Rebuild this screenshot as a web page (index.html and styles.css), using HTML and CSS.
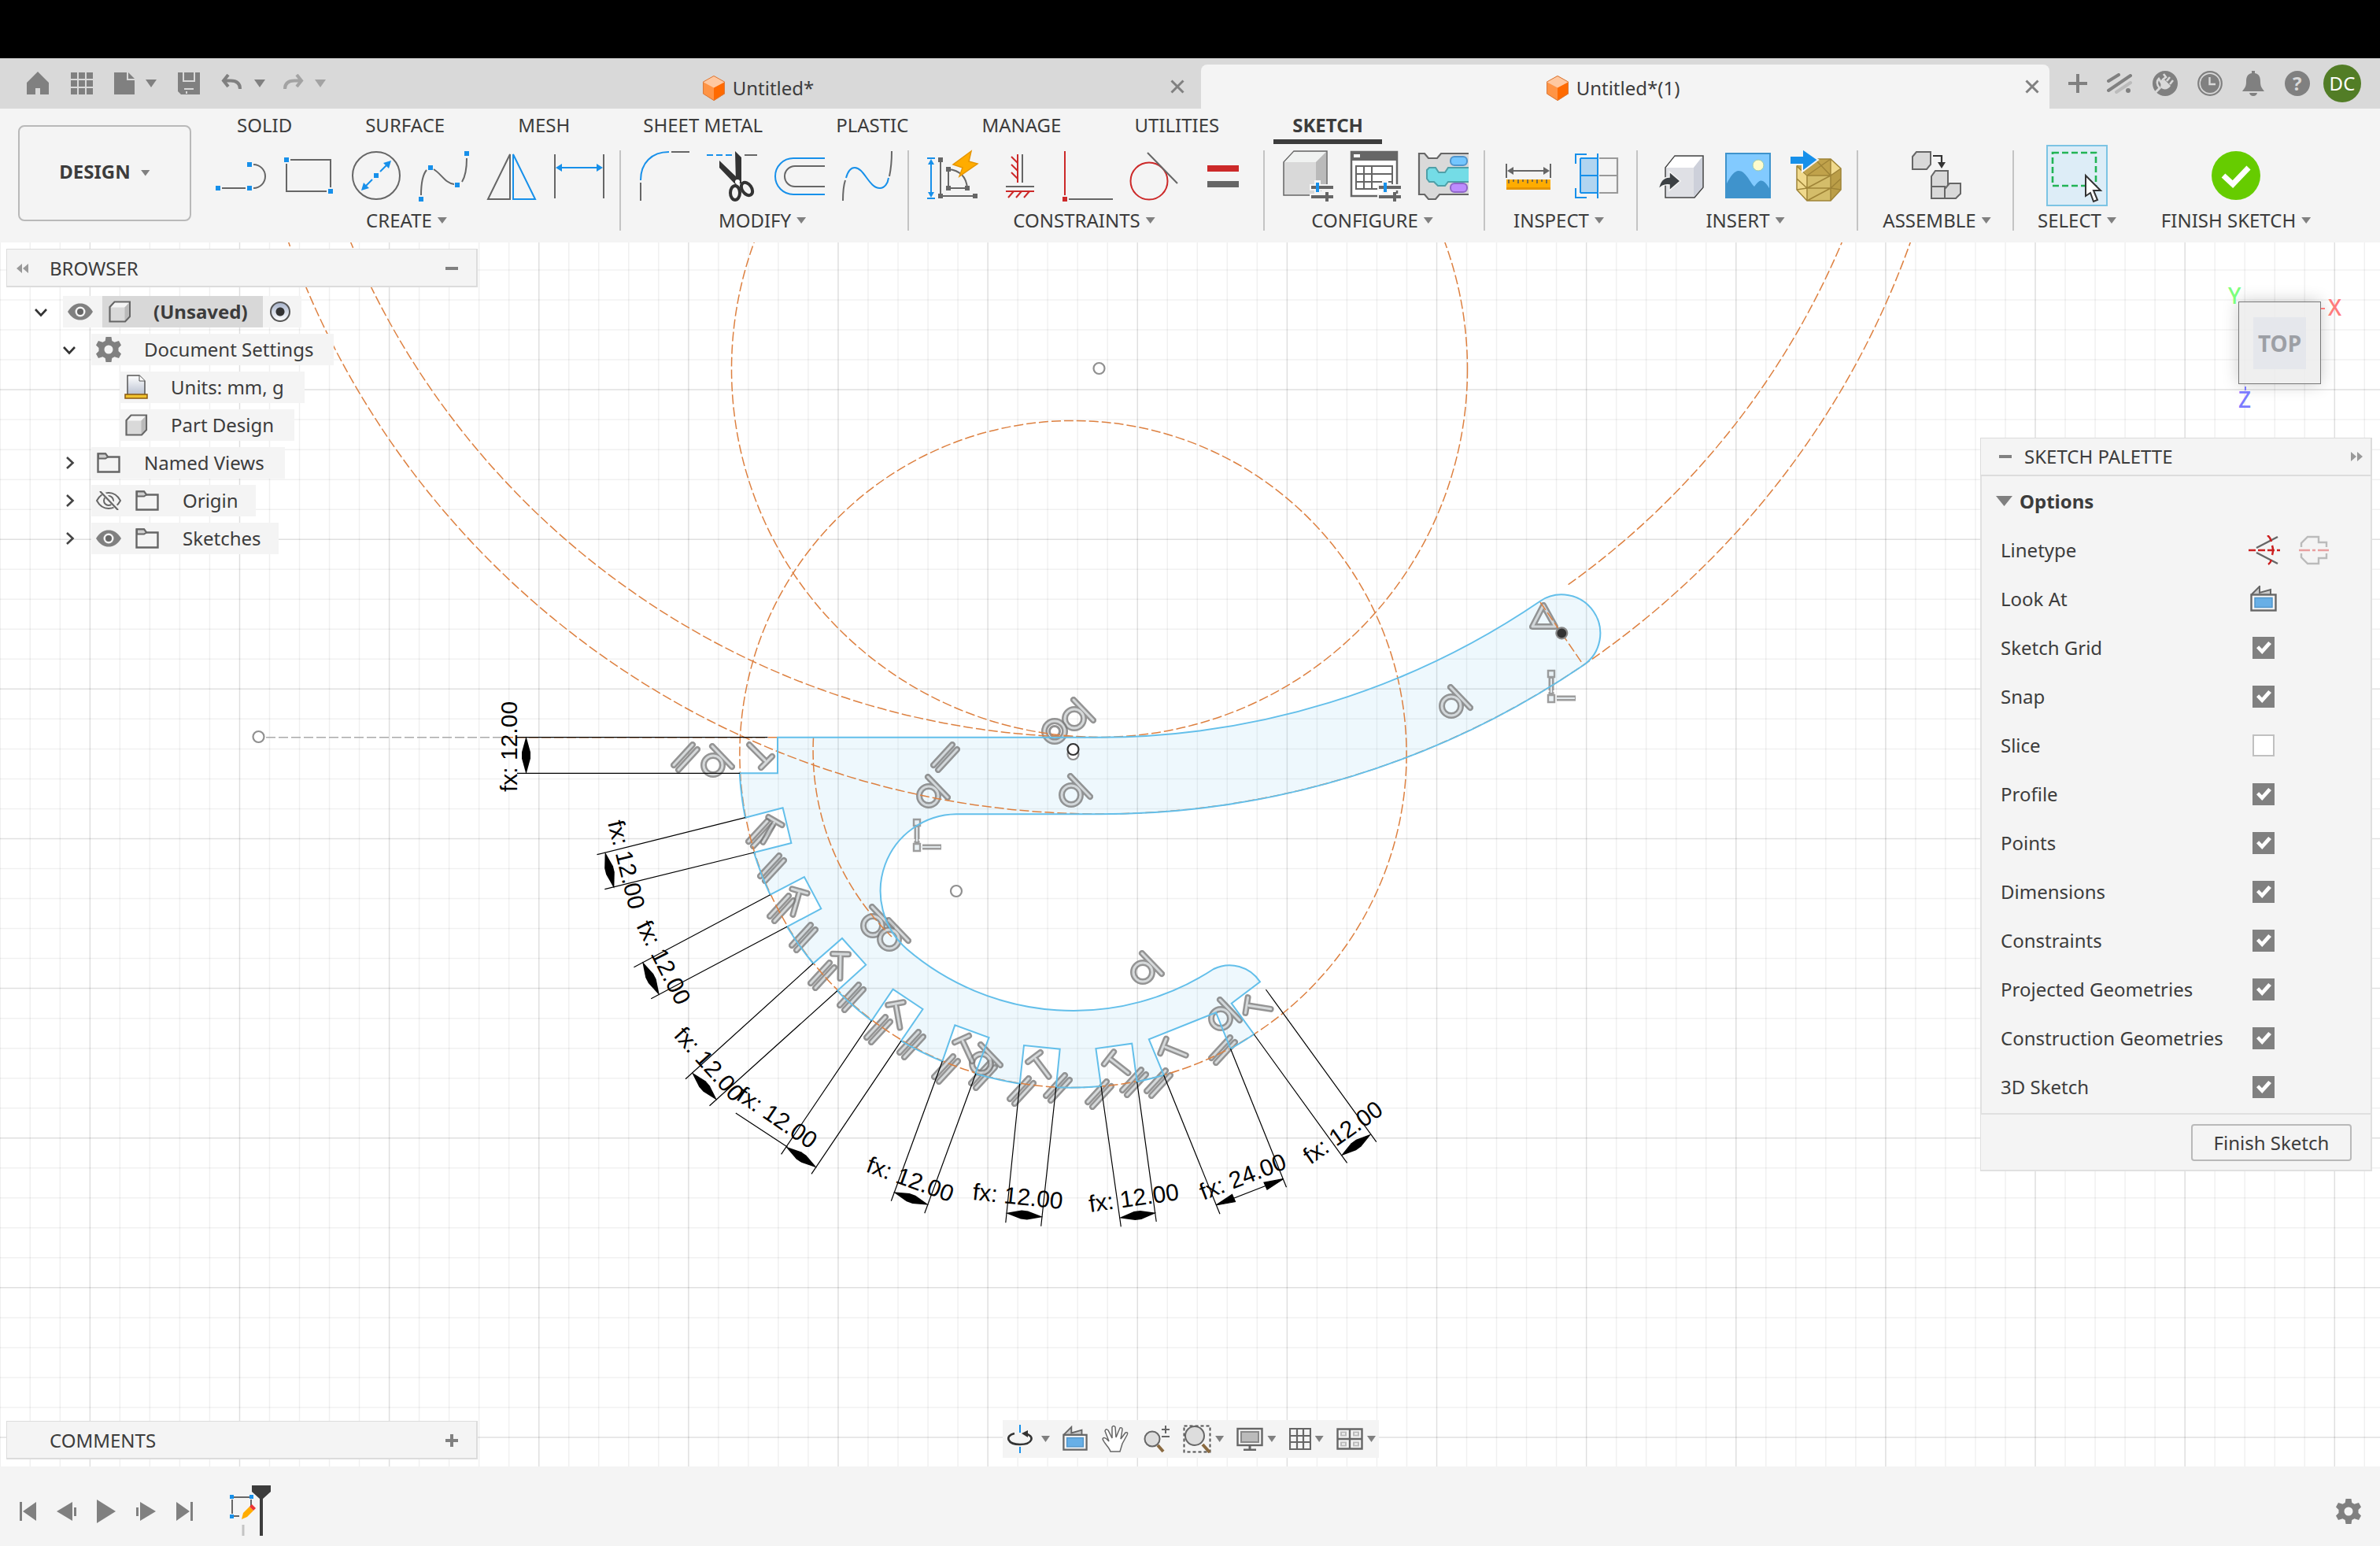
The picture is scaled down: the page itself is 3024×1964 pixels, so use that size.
FILE: index.html
```html
<!DOCTYPE html>
<html lang="en">
<head>
<meta charset="utf-8">
<title>Untitled*(1)</title>
<link rel="stylesheet" href="styles.css">
</head>
<body>
<svg class="defs" aria-hidden="true">
  <defs>
    <symbol id="i-box" viewBox="0 0 28 28"><path d="M1.500 8L7.500 1.500H27V20L21 26.500H1.500z" fill="#d9d9d9" stroke="#666" stroke-width="2.200"/><path d="M3 8.500L8 2.800H25.500L20.500 8.500z" fill="#f5f5f5"/><path d="M20.500 8.500L25.800 3V19.500L20.500 25z" fill="#bababa"/></symbol>
    <symbol id="i-folder" viewBox="0 0 30 28"><path d="M1.500 2.500H11L14 6.500H28.500V25.500H1.500z" fill="#f4f4f4" stroke="#666" stroke-width="2.400"/><path d="M2 2.500H11L14 6.500L11 8.500H2z" fill="#d0d0d0" stroke="#666" stroke-width="2"/></symbol>
    <symbol id="i-eye" viewBox="0 0 32 24"><path d="M0 12C5 4 10 1.500 16 1.500S27 4 32 12C27 20 22 22.500 16 22.500S5 20 0 12z" fill="#808080"/><circle cx="16" cy="12" r="6.500" fill="#f4f4f4"/><circle cx="16" cy="12" r="4" fill="#666"/></symbol>
    <symbol id="i-eyeoff" viewBox="0 0 32 24"><path d="M1 12C5 4.500 10 2 16 2S27 4.500 31 12C27 19.500 22 22 16 22S5 19.500 1 12z" fill="none" stroke="#666" stroke-width="2"/><circle cx="16" cy="12" r="6" fill="none" stroke="#666" stroke-width="2"/><path d="M6 -1L29 24" stroke="#f4f4f4" stroke-width="5"/><path d="M5 0L28 24" stroke="#666" stroke-width="2.200"/></symbol>
    <symbol id="i-gear" viewBox="0 0 32 32"><path d="M12.500 0h7l.8 5 3.200 1.700L29 5l3 5.600-3.500 3.400v4L32 21.400 29 27l-5.500-1.700-3.200 1.700-.8 5h-7l-.8-5-3.200-1.700L3 27l-3-5.600L3.500 18v-4L0 10.600 3 5l5.500 1.700L11.700 5zM16 10.500a5.500 5.500 0 1 0 0 11 5.500 5.500 0 0 0 0-11z" fill="#808080" fill-rule="evenodd"/></symbol>
    <symbol id="i-open" viewBox="0 0 18 12"><path d="M2 2L9 9.500 16 2" fill="none" stroke="#333" stroke-width="2.600"/></symbol>
    <symbol id="i-closed" viewBox="0 0 12 18"><path d="M2 2L9.500 9 2 16" fill="none" stroke="#444" stroke-width="2.600"/></symbol>
    <symbol id="i-comp" viewBox="0 0 28 32"><path d="M14 0L28 8V23L14 32 0 23V8z" fill="#ff9445"/><path d="M14 15L28 8V23L14 32z" fill="#ff6a00"/><path d="M14 0L28 8 14 15.500 0 8z" fill="#ffc8a0"/><path d="M14 .5L27.500 8V23L14 31.500.5 23V8z" fill="none" stroke="#d97a3c"/></symbol>
    <symbol id="i-look" viewBox="0 0 34 34"><path d="M2 11L12 1V9L26 5V11" fill="#ccc" stroke="#666" stroke-width="2"/><rect x="1.500" y="11.500" width="31" height="20" fill="#f4f4f4" stroke="#666" stroke-width="2.400"/><rect x="6" y="15.500" width="22" height="12" fill="#68afe6" stroke="#5096cc" stroke-width="1.500"/></symbol>
    <symbol id="i-x" viewBox="0 0 18 18"><path d="M1.500 1.500L16.500 16.500M16.500 1.500L1.500 16.500" stroke="#808080" stroke-width="3"/></symbol>

    <g id="dia"><path d="M-24 0L-4 -5.500H4L24 0L4 5.500H-4z"/></g>
    <g id="par"><path class="g-out" d="M-15 10L9 -16M-9 16L15 -10"/><path class="g-in" d="M-15 10L9 -16M-9 16L15 -10"/></g>
    <g id="tan"><path class="g-out" d="M-12 0A12 12 0 1 1 12 0A12 12 0 1 1 -12 0zM-1 -24L24 2"/><path class="g-in" d="M-12 0A12 12 0 1 1 12 0A12 12 0 1 1 -12 0zM-1 -24L24 2"/></g>
    <g id="tee"><path class="g-out" d="M-10 0H10M0 3V31"/><path class="g-in" d="M-10 0H10M0 3V31"/></g>
    <g id="ell"><path d="M-1 -30V-12M-1 -10V-2M6 -2H30" fill="none" stroke="#858585" stroke-width="7"/><path d="M-1 -32V-8" stroke="#858585" stroke-width="5"/><path d="M-5 -37H3V-29H-5zM-5 -6H3V3H-5z" fill="#e6eef2" stroke="#858585" stroke-width="2.400"/><path d="M-1 -27V-9M5 -2H29" fill="none" stroke="#dde4e8" stroke-width="2"/></g>
    <path id="body" d="M988 936.700H1397A996 996 0 0 0 1956.500 764A49 49 0 0 1 2012 845A1094 1094 0 0 1 1397 1034.300H1215A97.700 97.700 0 0 0 1152 1205.500A325.500 325.500 0 0 0 1542 1231A46 46 0 0 1 1601 1247.300L1564.700 1274.700L1593.300 1314A423.600 423.600 0 0 1 1563.500 1332.300L1545 1286.300L1459.800 1320.300L1478.600 1365.700A423.600 423.600 0 0 1 1444.700 1374.300L1438.200 1325.700L1392.400 1332L1399 1380A423.600 423.600 0 0 1 1341.800 1381.300L1346.700 1332.700L1301 1328L1295.700 1376.700A423.600 423.600 0 0 1 1239.400 1363.700L1256.500 1318L1213.300 1302.300L1197.300 1348.300A423.600 423.600 0 0 1 1145 1322.300L1172.500 1282L1134.600 1256.700L1107.400 1296.700A423.600 423.600 0 0 1 1063.800 1258.700L1100.200 1225.700L1070 1192L1033.200 1224A423.600 423.600 0 0 1 1000 1177.300L1043.300 1154.300L1021.900 1114L978.600 1136.700A423.600 423.600 0 0 1 958 1083L1005.400 1071L994.600 1026.300L946.900 1038.700A423.600 423.600 0 0 1 939.700 982.300H988z"/>
  </defs>
</svg>

<div class="screen-top"></div>

<header class="titlebar">
  <nav class="quick" aria-label="Quick access">
    <button class="q" aria-label="Home"><svg width="30" height="30"><path d="M15 0L29 14V29H18V21H12V29H1V14z" fill="#808080"/></svg></button>
    <button class="q" aria-label="Data panel"><svg width="28" height="28"><path d="M0 0h8v8H0zM10 0h8v8h-8zM20 0h8v8h-8zM0 10h8v8H0zM10 10h8v8h-8zM20 10h8v8h-8zM0 20h8v8H0zM10 20h8v8h-8zM20 20h8v8h-8z" fill="#808080"/></svg></button>
    <button class="q q-caret" aria-label="File"><svg width="26" height="28"><path d="M0 0H16V10H26V28H0zM18 0L26 8H18z" fill="#808080"/></svg><i class="caret big"></i></button>
    <button class="q" aria-label="Save"><svg width="28" height="28"><path d="M0 0H6V12H22V0H28V28H20V20H8V28H4L0 24zM8 0H20V10H8zM8 22H20V28H8zM10 24V27H12V24z" fill="#808080" fill-rule="evenodd"/></svg></button>
    <button class="q q-caret" aria-label="Undo"><svg width="28" height="24"><path d="M9 1L3 8.500 9 16M3 8.500H12C20 8.500 24 12 24 19" fill="none" stroke="#808080" stroke-width="4"/></svg><i class="caret big"></i></button>
    <button class="q q-caret faded" aria-label="Redo"><svg width="28" height="24"><path d="M19 1L25 8.500 19 16M25 8.500H16C8 8.500 4 12 4 19" fill="none" stroke="#808080" stroke-width="4"/></svg><i class="caret big"></i></button>
  </nav>
  <div class="doc-tab">
    <a class="doc-name" href="#"><svg width="28" height="32"><use href="#i-comp"/></svg>Untitled*</a>
    <button class="close" aria-label="Close"><svg width="18" height="18"><use href="#i-x"/></svg></button>
  </div>
  <div class="doc-tab active">
    <a class="doc-name" href="#"><svg width="28" height="32"><use href="#i-comp"/></svg>Untitled*(1)</a>
    <button class="close" aria-label="Close"><svg width="18" height="18"><use href="#i-x"/></svg></button>
  </div>
  <div class="account">
    <button aria-label="New tab"><svg width="24" height="24"><path d="M12 0V24M0 12H24" stroke="#808080" stroke-width="4"/></svg></button>
    <button aria-label="Extensions"><svg width="32" height="26"><g stroke="#808080" stroke-width="4" stroke-linecap="round"><path d="M2 10L15 2M2 22L30 3"/><path d="M12 24L30 12" stroke="#bbb"/></g><circle cx="27" cy="22" r="3" fill="#808080"/></svg></button>
    <button aria-label="Offline status"><svg width="32" height="32"><circle cx="16" cy="16" r="14.500" fill="none" stroke="#808080" stroke-width="3"/><circle cx="16" cy="16" r="14" fill="#808080"/><path d="M9 22C4 16 6 12 8 10L11 15 13 11 17 8 14 4M18 13L22 8M22 17L26 12" fill="none" stroke="#d9d9d9" stroke-width="2.600"/><path d="M11 14L15 11 23 19C20 24 14 25 10 21z" fill="#d9d9d9"/><path d="M10 21L3 28" stroke="#d9d9d9" stroke-width="3"/></svg></button>
    <button aria-label="Job status"><svg width="32" height="32"><circle cx="16" cy="16" r="14.800" fill="none" stroke="#808080" stroke-width="2.200"/><circle cx="16" cy="16" r="12" fill="#808080"/><path d="M15.500 8V17H23" fill="none" stroke="#d9d9d9" stroke-width="2.400"/></svg></button>
    <button aria-label="Notifications"><svg width="28" height="32"><path d="M12 0H16V3C22 4 23 9 23 14C23 20 25 22 28 26H0C3 22 5 20 5 14C5 9 6 4 12 3zM9 28H19Q18 32 14 32T9 28z" fill="#808080"/></svg></button>
    <button aria-label="Help" class="help">?</button>
    <button aria-label="Account" class="avatar">DC</button>
  </div>
</header>

<section class="ribbon">
  <button class="workspace">DESIGN<i class="caret"></i></button>
  <div class="ribbon-main">
    <nav class="tabs">
      <a href="#">SOLID</a><a href="#">SURFACE</a><a href="#">MESH</a><a href="#">SHEET METAL</a><a href="#">PLASTIC</a><a href="#">MANAGE</a><a href="#">UTILITIES</a><a href="#" class="on">SKETCH</a>
    </nav>
    <div class="groups">
      <div class="group"><div class="tools">
        <button aria-label="Line"><svg viewBox="0 0 64 64"><g class="k"><path d="M8 48H38M48 18A15 15 0 0 1 48 48"/></g><path class="bf" d="M0 45h6v6H0zM40 45h6v6h-6zM40 15h6v6h-6z"/></svg></button>
        <button aria-label="Rectangle"><svg viewBox="0 0 64 64"><path class="k" d="M9 12H60V47M4 17V52H55"/><path class="bf" d="M1 9h6v6H1zM57 49h6v6h-6z"/></svg></button>
        <button aria-label="Circle"><svg viewBox="0 0 64 64"><circle class="k" cx="32" cy="32" r="30"/><path class="b" d="M37 27L46 18M27 37L18 46"/><path class="bf" d="M29 29h6v6h-6zM51 13L48 23 41 16zM13 51L16 41 23 48z"/></svg></button>
        <button aria-label="Spline"><svg viewBox="0 0 64 64"><path class="k" d="M3 57C3 42 5 31 10 25M19 24C29 30 34 42 45 43M55 40C60 32 61 20 61 10"/><path class="bf" d="M0 59h6v6H0zM12 19h6v6h-6zM46 41h6v6h-6zM58 1h6v6h-6z"/></svg></button>
        <button aria-label="Mirror"><svg viewBox="0 0 64 64"><path class="k" d="M30 5V62H2z"/><path class="b" d="M34 5V62H62z"/></svg></button>
        <button aria-label="Sketch dimension"><svg viewBox="0 0 64 64"><path class="k" d="M1 5V61M63 5V61"/><path class="b" d="M6 22H58"/><path class="bf" d="M2 22L10 17V27zM62 22L54 17V27z"/></svg></button>
      </div><button class="menu">CREATE<i class="caret"></i></button></div>

      <div class="group"><div class="tools">
        <button aria-label="Fillet"><svg viewBox="0 0 64 64"><path class="b" d="M2 38C2 16 16 2 38 2"/><path class="k" d="M41 2H64M2 41V64"/></svg></button>
        <button aria-label="Trim"><svg viewBox="0 0 64 64"><path class="b" d="M0 6H34" stroke-dasharray="8 4" stroke-width="3"/><path class="k" d="M48 6H64"/><path d="M36 1L44 9V42L37 42zM16 13L42 38 37 44 16 22z" fill="#333"/><ellipse cx="36" cy="54" rx="6" ry="9" fill="none" stroke="#333" stroke-width="4"/><ellipse cx="51" cy="49" rx="6" ry="9" fill="none" stroke="#333" stroke-width="4" transform="rotate(-35 51 49)"/><circle cx="39" cy="40" r="3" fill="#fff"/></svg></button>
        <button aria-label="Offset"><svg viewBox="0 0 64 64"><path class="b" d="M64 10H24A23 23 0 0 0 24 56H64"/><path class="k" d="M64 20H26A13 13 0 0 0 26 46H64"/></svg></button>
        <button aria-label="Extend"><svg viewBox="0 0 64 64"><path class="k" d="M1 64C1 54 2 44 4 38M60 33C62 24 63 14 63 1"/><path class="b" d="M5 35C8 24 12 22 16 22C28 22 34 48 48 48C54 48 58 42 59 35"/></svg></button>
      </div><button class="menu">MODIFY<i class="caret"></i></button></div>

      <div class="group"><div class="tools">
        <button aria-label="Auto constrain"><svg viewBox="0 0 64 64"><path class="b" d="M0 10H10M0 61H10M5 14V57"/><path class="bf" d="M5 11L9 18H1zM5 60L1 53H9z"/><path class="k" d="M17 12V58H60M27 24V48H51M27 24Q49 26 51 48"/><path d="M14 9h6v6h-6zM14 55h6v6h-6zM58 55h6v6h-6zM24 21h6v6h-6zM24 45h6v6h-6zM48 45h6v6h-6z" fill="#666"/><path d="M56 1L33 18 45 22 41 33 64 17 53 14z" fill="#ffac00" stroke="#e69500" stroke-width="1.500"/></svg></button>
        <button aria-label="Horizontal/Vertical"><svg viewBox="0 0 64 64"><path class="k" d="M35 5V41M14 46H50"/><path class="r" d="M29 5V41M29 16L21 8M29 26L21 18M29 36L21 28M14 52H50M24 52L17 60M34 52L27 60M44 52L37 60"/></svg></button>
        <button aria-label="Perpendicular"><svg viewBox="0 0 64 64"><path class="r" d="M3 1V57"/><path class="k" d="M8 62H64"/><path d="M0 59h6v6H0z" fill="#cc2929"/></svg></button>
        <button aria-label="Tangent"><svg viewBox="0 0 64 64"><circle class="r" cx="24" cy="39" r="23.500"/><path class="k" d="M22 3L60 42"/></svg></button>
        <button aria-label="Equal"><svg viewBox="0 0 64 64"><path d="M12 19h40v8H12z" fill="#cc2929"/><path d="M12 39h40v8H12z" fill="#666"/></svg></button>
      </div><button class="menu">CONSTRAINTS<i class="caret"></i></button></div>

      <div class="group"><div class="tools">
        <button aria-label="Configure model"><svg viewBox="0 0 64 64"><path d="M1 15L14 1H56V43L42 57H1z" fill="#d9d9d9" stroke="#666" stroke-width="1.500"/><path d="M2 15L14 2H55L42 15z" fill="#f0f2f1"/><path d="M42 15L55 2V43L42 56z" fill="#bababa"/><path d="M34 47H66M34 59H66M44 38V55" stroke="#f4f4f4" stroke-width="8"/><path d="M36 47H64M36 59H64M56 53V65" stroke="#666" stroke-width="4"/><path d="M44 41V53" stroke="#1790ea" stroke-width="4"/></svg></button>
        <button aria-label="Configuration table"><svg viewBox="0 0 64 64"><path d="M1 2H59V58H1z" fill="#fff" stroke="#666" stroke-width="2.500"/><path d="M0 1H60V13H0z" fill="#666"/><path d="M4 5h8v4H4z" fill="#fff"/><path class="k" d="M7 20H53V49H7zM7 30H53M7 40H53M17 20V49M27 20V49"/><path d="M34 47H66M34 59H66M44 38V55" stroke="#f4f4f4" stroke-width="8"/><path d="M36 47H64M36 59H64M56 53V65" stroke="#666" stroke-width="4"/><path d="M44 41V53" stroke="#1790ea" stroke-width="4"/></svg></button>
        <button aria-label="Feature blocks"><svg viewBox="0 0 64 64"><path d="M64 4H29L24 10H13L8 4H1V56H8L13 62H22L27 56H64" fill="#d9d9d9" stroke="#666" stroke-width="2.200"/><path d="M64 22H38L34 28H26L22 22H14L11 25V36L14 40H20L25 45H34L38 40H64" fill="#74dce6" stroke="#4fa0a8" stroke-width="2"/><rect x="41" y="8" width="21" height="11" rx="5" fill="#74c6ff" stroke="#4f95cc" stroke-width="2"/><rect x="41" y="42" width="21" height="11" rx="5" fill="#bd8cff" stroke="#9066c8" stroke-width="2"/></svg></button>
      </div><button class="menu">CONFIGURE<i class="caret"></i></button></div>

      <div class="group"><div class="tools">
        <button aria-label="Measure"><svg viewBox="0 0 64 64"><path class="k" d="M4 17V35M60 17V35M8 26H56"/><path d="M5 26L13 21V31zM59 26L51 21V31z" fill="#666"/><path d="M4 37H60V49H4z" fill="#ffac00"/><path d="M4 47H60V50H4z" fill="#e69500"/><path d="M7 37V42M13 37V40M19 37V42M25 37V40M31 37V42M37 37V40M43 37V42M49 37V40M55 37V42" stroke="#555" stroke-width="1.500"/></svg></button>
        <button aria-label="Section analysis"><svg viewBox="0 0 64 64"><path d="M36 10H59V54H36M36 32H59" fill="none" stroke="#999" stroke-width="2.200"/><path d="M12 10H34V54H12z" fill="#b1d5f0"/><path class="b" d="M34 4V61M12 10H34M12 32H34M12 54H34M12 10V54M20 5H6V17M20 60H6V48"/></svg></button>
      </div><button class="menu">INSPECT<i class="caret"></i></button></div>

      <div class="group"><div class="tools">
        <button aria-label="Insert derive"><svg viewBox="0 0 64 64"><path d="M12 22L24 7H60V47L49 60H12z" fill="#dfe0e5" stroke="#444" stroke-width="1.500"/><path d="M13 22L24 8H59L48 22z" fill="#fff"/><path d="M48 22L59 8V47L48 59z" fill="#cdd0da"/><path d="M3 50C5 38 10 34 17 34V27L31 39 17 51V44C11 43 7 45 3 50z" fill="#3c4044" stroke="#f4f4f4" stroke-width="1.500"/></svg></button>
        <button aria-label="Insert image"><svg viewBox="0 0 64 64"><path d="M3 4H59V60H3z" fill="#82caff"/><path d="M3 44C9 32 14 26 19 26C28 26 33 40 39 46C45 38 47 38 50 39Q55 42 59 50V60H3z" fill="#3f93cc"/><circle cx="44" cy="19" r="7" fill="#fffccc" stroke="#99c9b0"/><path d="M3 4H59V60H3z" fill="none" stroke="#3f93cc" stroke-width="2"/></svg></button>
        <button aria-label="Insert mesh"><svg viewBox="0 0 64 64"><path d="M7 20L20 11H50L63 23V50L50 64H20L7 50z" fill="#d4bd6a"/><path d="M20 11H50V32H22L8 20z" fill="#c0a24b"/><path d="M50 32L63 23V50L50 64z" fill="#bb9e48"/><path d="M50 11L63 23 50 32z" fill="#f0d98c"/><path d="M7 20L20 32V64L7 50z" fill="#f0d98c"/><path d="M7 20L20 11H50L63 23V50L50 64H20L7 50zM20 32H50V64M20 32V64M7 20L20 32M50 11V32L63 23M20 32L50 11M20 48H50L63 36M20 48L50 32M20 64L50 48M20 48L7 36M50 32L30 11M50 48L63 50M7 50L20 48" fill="none" stroke="#9f8437" stroke-width="1.500"/><path d="M-2 7H14V-2L34 12 14 27V18H-2z" fill="#1790ea" stroke="#f4f4f4" stroke-width="2"/></svg></button>
      </div><button class="menu">INSERT<i class="caret"></i></button></div>

      <div class="group wide"><div class="tools">
        <button aria-label="New component"><svg viewBox="0 0 64 64"><g fill="#d9d9d9" stroke="#666" stroke-width="2"><path d="M1 8L6 2H24V18L19 24H1z"/><path d="M25 33L30 26H46V60H25z"/><path d="M42 49L48 42H62V55L56 61H42z"/><path d="M25 46H42V61H25z"/></g><path d="M27 7H38V16" fill="none" stroke="#333" stroke-width="2.200"/><path d="M33 15H43L38 23z" fill="#333"/></svg></button>
      </div><button class="menu">ASSEMBLE<i class="caret"></i></button></div>

      <div class="group select"><div class="tools">
        <button aria-label="Select" class="pressed"><svg viewBox="0 0 64 64"><path d="M1 3H56V45H1z" fill="none" stroke="#22b455" stroke-width="2.600" stroke-dasharray="8 4"/><path d="M43 32L62 51H53L58 63 53 65 49 54 43 58z" fill="#fff" stroke="#333" stroke-width="2"/></svg></button>
      </div><button class="menu">SELECT<i class="caret"></i></button></div>

      <div class="group finish"><div class="tools">
        <button aria-label="Finish sketch"><svg viewBox="0 0 64 64"><circle cx="32" cy="32" r="31" fill="#66cc00"/><path d="M16 32L28 43 48 22" fill="none" stroke="#fff" stroke-width="7"/></svg></button>
      </div><button class="menu">FINISH SKETCH<i class="caret"></i></button></div>
    </div>
  </div>
</section>

<main class="canvas">
  <svg class="sketch" viewBox="0 308 3024 1555" preserveAspectRatio="xMidYMin slice">
    <g fill="none">
      <path d="M-.5 1086H3100" stroke="#000" stroke-opacity=".06" stroke-width="1560" stroke-dasharray="1.500 36.526"/>
      <path d="M1512 304.200V1900" stroke="#000" stroke-opacity=".055" stroke-width="3100" stroke-dasharray="1.500 36.526"/>
      <path d="M-76.500 1086H3100" stroke="#000" stroke-opacity=".07" stroke-width="1560" stroke-dasharray="1.500 188.630"/>
      <path d="M1512 304.200V1900" stroke="#000" stroke-opacity=".07" stroke-width="3100" stroke-dasharray="1.500 188.630"/>
    </g>
    <use href="#body" fill="#5bb8ec" fill-opacity=".1"/>
    <g class="glyphs">
      <use href="#par" x="871" y="962"/><use href="#par" x="1201" y="962"/><use href="#par" x="966" y="1059"/><use href="#par" x="981" y="1103"/><use href="#par" x="993" y="1154"/><use href="#par" x="1021" y="1191"/><use href="#par" x="1045" y="1239"/><use href="#par" x="1082" y="1267"/><use href="#par" x="1116" y="1308"/><use href="#par" x="1158" y="1327"/><use href="#par" x="1202" y="1358"/><use href="#par" x="1249" y="1366"/><use href="#par" x="1298" y="1386"/><use href="#par" x="1344" y="1382"/><use href="#par" x="1397" y="1390"/><use href="#par" x="1441" y="1375"/><use href="#par" x="1472" y="1376"/><use href="#par" x="1554" y="1334"/>
      <use href="#tan" x="906" y="972"/><use href="#tan" x="1365" y="913"/><use href="#tan" x="1361" y="1010"/><use href="#tan" x="1844" y="897"/><use href="#tan" x="1180" y="1011"/><use href="#tan" x="1109" y="1176"/><use href="#tan" x="1130" y="1193"/><use href="#tan" x="1247" y="1351"/><use href="#tan" x="1452" y="1235"/><use href="#tan" x="1551" y="1294"/>
      <use href="#tee" transform="translate(974 968) rotate(135)"/><use href="#tee" transform="translate(985 1043) rotate(30)"/><use href="#tee" transform="translate(1016 1132) rotate(16)"/><use href="#tee" transform="translate(1068 1212) rotate(1)"/><use href="#tee" transform="translate(1138 1275) rotate(-10)"/><use href="#tee" transform="translate(1222 1320) rotate(-25)"/><use href="#tee" transform="translate(1314 1343) rotate(-37)"/><use href="#tee" transform="translate(1409 1344) rotate(-52)"/><use href="#tee" transform="translate(1478 1329) rotate(-68)"/><use href="#tee" transform="translate(1584 1277) rotate(-81)"/>
      <use href="#ell" x="1166" y="1078"/><use href="#ell" x="1972" y="889"/>
      <g><path class="g-out" d="M1961 769L1947 796H1976z"/><path class="g-in" d="M1961 769L1947 796H1976z"/></g>
      <g><circle class="g-out" cx="1340" cy="929" r="13"/><circle class="g-in" cx="1340" cy="929" r="13"/><circle cx="1340" cy="929" r="6.500" fill="none" stroke="#777" stroke-width="3"/></g>
    </g>
    <g class="proj">
      <circle cx="1397" cy="469" r="467.500"/>
      <circle cx="1363.500" cy="958" r="423.600"/>
      <circle cx="1397" cy="-60" r="1094"/>
      <path d="M438 289A1024.300 1024.300 0 0 0 1393.500 936.600M1992.600 742.700A1024.300 1024.300 0 0 0 2348 289"/>
      <path d="M1033.500 937A330 330 0 0 0 1133 1190M1957 765L2012 845M640 936.700H990"/>
    </g>
    <path d="M338 936.700H640" stroke="#aaa" stroke-width="1.500" stroke-dasharray="12 4"/>
    <use href="#body" fill="none" stroke="#63bfea" stroke-width="2"/>

    <g fill="#fff" stroke="#909090" stroke-width="2.200">
      <circle cx="1396.500" cy="468" r="7"/><circle cx="1215" cy="1132" r="7"/><circle cx="328.500" cy="936" r="7"/><circle cx="1363.500" cy="958" r="7"/>
      <circle cx="1363.500" cy="952" r="7" stroke="#333"/><circle cx="1984.300" cy="804.300" r="7" fill="#333" stroke="#888"/>
    </g>

    <g class="dims">
      <path d="M657 936.700H975.500M657 982.300H940M758.500 1085.700L946.900 1038.700M768.300 1129.700L958 1083M805.400 1228.700L978.600 1136.700M827.200 1268.700L1000 1177.300M871 1370.700L1033.200 1224M901.500 1404.700L1063.800 1258.700M992.600 1466.300L1107.400 1296.700M1031 1491.300L1145 1322.300M934.800 1414L1000.700 1457.300M1132.300 1525.700L1197.300 1348.300M1174.800 1541.300L1239.900 1363.700M1277.800 1553.300L1295.700 1376.700M1322.700 1557.700L1341.800 1381.300M1399 1380L1424.300 1558.300M1444.700 1374.300L1469.200 1552M1478.600 1365.700L1550 1542.300M1563.500 1332.300L1634.500 1508.300M1593.300 1314L1711.600 1477.300M1608.400 1257L1748.800 1450.700M1545 1531L1630.400 1497.700"/>
      <use href="#dia" transform="translate(668.500 959.500) rotate(90)"/>
      <use href="#dia" transform="translate(774.500 1105.500) rotate(76)"/>
      <use href="#dia" transform="translate(827 1243) rotate(63)"/>
      <use href="#dia" transform="translate(895 1380) rotate(48)"/>
      <use href="#dia" transform="translate(1018 1470) rotate(34)"/>
      <use href="#dia" transform="translate(1157.500 1522.500) rotate(20)"/>
      <use href="#dia" transform="translate(1301.500 1543.500) rotate(6)"/>
      <use href="#dia" transform="translate(1445.500 1544) rotate(-8)"/>
      <use href="#dia" transform="translate(1723 1454.500) rotate(-36)"/>
      <path d="M1545 1531L1565.500 1517.500L1569.500 1526.500zM1630.400 1497.700L1610 1511.200L1606 1502.200z"/>
      <text transform="translate(657 1006) rotate(-90)">fx: 12.00</text>
      <text transform="translate(772 1045) rotate(76)">fx: 12.00</text>
      <text transform="translate(808 1176) rotate(63)">fx: 12.00</text>
      <text transform="translate(855 1316) rotate(48)">fx: 12.00</text>
      <text transform="translate(934 1396) rotate(34)">fx: 12.00</text>
      <text transform="translate(1099 1488) rotate(20)">fx: 12.00</text>
      <text transform="translate(1235 1524) rotate(6)">fx: 12.00</text>
      <text transform="translate(1385 1540) rotate(-8)">fx: 12.00</text>
      <text transform="translate(1529 1525) rotate(-21)">fx: 24.00</text>
      <text transform="translate(1665 1480) rotate(-35)">fx: 12.00</text>
    </g>
  </svg>

  <aside class="browser">
    <header class="panel-head">
      <svg width="16" height="12"><path d="M7 0V12L0 6zM15 0V12L8 6z" fill="#999"/></svg>
      <h2>BROWSER</h2>
      <button aria-label="Collapse"><svg width="16" height="16"><path d="M0 8H16" stroke="#808080" stroke-width="4"/></svg></button>
    </header>
    <ul class="tree">
      <li class="l0"><svg class="tw" width="18" height="12"><use href="#i-open"/></svg><span class="node root"><svg width="32" height="24"><use href="#i-eye"/></svg><span class="picked"><svg width="28" height="28"><use href="#i-box"/></svg><b>(Unsaved)</b></span><input type="radio" checked aria-label="Activate (Unsaved)"></span></li>
      <li class="l1"><svg class="tw" width="18" height="12"><use href="#i-open"/></svg><span class="node"><svg width="32" height="32"><use href="#i-gear"/></svg><span>Document Settings</span></span></li>
      <li class="l2"><span class="node"><svg width="30" height="32"><defs><linearGradient id="pg" x2="0" y2="1"><stop stop-color="#fff"/><stop offset="1" stop-color="#b8c0d0"/></linearGradient></defs><path d="M4 1H19L26 8V26H4z" fill="url(#pg)" stroke="#555" stroke-width="1.500"/><path d="M19 1V8H26" fill="#fff" stroke="#555"/><path d="M1 25H29V30H1z" fill="#f0c22e" stroke="#8a5a10" stroke-width="1.500"/></svg><span>Units: mm, g</span></span></li>
      <li class="l2"><span class="node"><svg width="30" height="28"><use href="#i-box"/></svg><span>Part Design</span></span></li>
      <li class="l1"><svg class="tw" width="12" height="18"><use href="#i-closed"/></svg><span class="node"><svg width="32" height="28"><use href="#i-folder"/></svg><span>Named Views</span></span></li>
      <li class="l1"><svg class="tw" width="12" height="18"><use href="#i-closed"/></svg><span class="node two"><svg width="32" height="24" overflow="visible"><use href="#i-eyeoff"/></svg><svg width="30" height="28"><use href="#i-folder"/></svg><span>Origin</span></span></li>
      <li class="l1"><svg class="tw" width="12" height="18"><use href="#i-closed"/></svg><span class="node two"><svg width="32" height="24"><use href="#i-eye"/></svg><svg width="30" height="28"><use href="#i-folder"/></svg><span>Sketches</span></span></li>
    </ul>
  </aside>

  <aside class="comments panel-head">
    <h2>COMMENTS</h2>
    <button aria-label="Add comment"><svg width="16" height="16"><path d="M8 0V16M0 8H16" stroke="#808080" stroke-width="4"/></svg></button>
  </aside>

  <div class="viewcube" role="img" aria-label="View cube">
    <span class="ax ax-y">Y</span><span class="ax ax-x">X</span><span class="ax ax-z">Z</span>
    <div class="face"><span>TOP</span></div>
  </div>

  <form class="palette">
    <header class="panel-head">
      <svg width="16" height="16"><path d="M0 8H16" stroke="#808080" stroke-width="4"/></svg>
      <h2>SKETCH PALETTE</h2>
      <svg class="ff" width="16" height="12"><path d="M0 0V12L7 6zM8 0V12L15 6z" fill="#999"/></svg>
    </header>
    <div class="palette-body">
      <h3><svg width="22" height="14"><path d="M0 0H21L10.500 13z" fill="#808080"/></svg>Options</h3>
      <div class="opt"><span>Linetype</span><span class="two-icons"><button type="button" aria-label="Construction"><svg width="40" height="38"><path d="M10 16L37 2M10 22L37 36" stroke="#666" stroke-width="2.500"/><path d="M0 19H40" stroke="#cc2020" stroke-width="2.500" stroke-dasharray="9 3"/><path d="M24 0Q28 3 29 8M30 13Q32 19 30 25M29 31Q28 35 25 37" fill="none" stroke="#cc2020" stroke-width="2.500"/></svg></button><button type="button" aria-label="Centerline"><svg width="38" height="38"><path d="M3 15V10L11 2H25V9H35V15M3 23V28L11 36H25V29H35V23" fill="none" stroke="#bbb" stroke-width="2.400"/><path d="M0 19H38" stroke="#e8a0a0" stroke-width="2.400" stroke-dasharray="14 3 4 3"/></svg></button></span></div>
      <div class="opt"><span>Look At</span><button type="button" aria-label="Look At"><svg width="34" height="34"><use href="#i-look"/></svg></button></div>
      <div class="opt"><label for="o1">Sketch Grid</label><input id="o1" type="checkbox" checked></div>
      <div class="opt"><label for="o2">Snap</label><input id="o2" type="checkbox" checked></div>
      <div class="opt"><label for="o3">Slice</label><input id="o3" type="checkbox"></div>
      <div class="opt"><label for="o4">Profile</label><input id="o4" type="checkbox" checked></div>
      <div class="opt"><label for="o5">Points</label><input id="o5" type="checkbox" checked></div>
      <div class="opt"><label for="o6">Dimensions</label><input id="o6" type="checkbox" checked></div>
      <div class="opt"><label for="o7">Constraints</label><input id="o7" type="checkbox" checked></div>
      <div class="opt"><label for="o8">Projected Geometries</label><input id="o8" type="checkbox" checked></div>
      <div class="opt"><label for="o9">Construction Geometries</label><input id="o9" type="checkbox" checked></div>
      <div class="opt"><label for="o10">3D Sketch</label><input id="o10" type="checkbox" checked></div>
    </div>
    <footer><button type="button">Finish Sketch</button></footer>
  </form>

  <nav class="navbar" aria-label="View controls">
    <button class="nv c" aria-label="Orbit"><svg width="34" height="36"><path d="M17 0V10M17 28V36" stroke="#1790ea" stroke-width="2"/><path d="M23 11C37 14 33 25 17 25S-3 14 10 11" fill="none" stroke="#333" stroke-width="2.600"/><path d="M19 11L27 7V16z" fill="#333"/></svg><i class="caret"></i></button>
    <button class="nv" aria-label="Look at"><svg width="32" height="34"><use href="#i-look"/></svg></button>
    <button class="nv" aria-label="Pan"><svg width="36" height="36"><path d="M12 34C10 28 4 24 2 18Q3 15 7 18L10 21 5 8Q6 4 9 7L14 17 14 3Q16 0 18 3L19 16 24 4Q27 3 27 6L25 18 31 10Q35 9 33 13L27 24 24 34z" fill="#fff" stroke="#666" stroke-width="1.500"/></svg></button>
    <button class="nv" aria-label="Zoom"><svg width="36" height="36"><circle cx="13" cy="18" r="9.500" fill="#ddd" stroke="#666" stroke-width="2"/><path d="M20 26L27 34" stroke="#8a6a40" stroke-width="4"/><path d="M30 1V11M25 6H35M25 15H35" stroke="#666" stroke-width="2"/></svg></button>
    <button class="nv c" aria-label="Fit"><svg width="36" height="36"><rect x="1.500" y="1.500" width="33" height="33" fill="none" stroke="#555" stroke-width="2" stroke-dasharray="4 3"/><circle cx="15" cy="14" r="12" fill="#ddd" stroke="#666" stroke-width="2"/><path d="M25 25L34 35" stroke="#8a6a40" stroke-width="4"/></svg><i class="caret"></i></button>
    <button class="nv c" aria-label="Display settings"><svg width="34" height="30"><rect x="1.500" y="2" width="31" height="21" fill="#f4f4f4" stroke="#666" stroke-width="2.400"/><rect x="6" y="6" width="22" height="13" fill="#bbb" stroke="#888" stroke-width="2"/><path d="M17 23V28M9 29H25" stroke="#666" stroke-width="3"/></svg><i class="caret"></i></button>
    <button class="nv c" aria-label="Grid and snaps"><svg width="28" height="28"><path d="M1 1H27V27H1zM10 1V27M18 1V27M1 10H27M1 18H27" fill="none" stroke="#666" stroke-width="2.200"/></svg><i class="caret"></i></button>
    <button class="nv c" aria-label="Viewports"><svg width="34" height="28"><path d="M1.500 1.500H32.500V26.500H1.500zM17 1V27M1 14H33" fill="none" stroke="#666" stroke-width="2.400"/><path d="M6 5.500h6v4H6zM22 5.500h6v4h-6zM6 18.500h6v4H6zM22 18.500h6v4h-6z" fill="none" stroke="#bbb" stroke-width="2"/></svg><i class="caret"></i></button>
  </nav>
</main>

<footer class="timeline">
  <div class="play">
    <button aria-label="Go to start"><svg width="24" height="24"><path d="M1 0H4V24H1zM22 0V24L5 12z" fill="#808080"/></svg></button>
    <button aria-label="Step back"><svg width="26" height="24"><path d="M20 0V24L0 12zM22 7H25V18H22z" fill="#808080"/></svg></button>
    <button aria-label="Play"><svg width="26" height="30"><path d="M1 0L25 15 1 30z" fill="#808080"/></svg></button>
    <button aria-label="Step forward"><svg width="26" height="24"><path d="M6 0V24L26 12zM1 7H4V18H1z" fill="#808080"/></svg></button>
    <button aria-label="Go to end"><svg width="24" height="24"><path d="M20 0H23V24H20zM2 0V24L19 12z" fill="#808080"/></svg></button>
  </div>
  <svg class="track" width="60" height="68"><path d="M6 15H27M6 39H14M5 18V36M29 18V26" stroke="#666" stroke-width="2"/><path d="M2 12h5v5H2zM27 12h5v5h-5zM2 37h5v5H2z" fill="#1790ea"/><path d="M17 43L19 35 27 27 32 32 24 40z" fill="#ffac00"/><path d="M27 27L30 24 35 29 32 32z" fill="#e33"/><path d="M19 50V64" stroke="#c4c4c4" stroke-width="3"/><path d="M30 0H54V8L44 17V64H40V17L30 8z" fill="#3c3c3c"/></svg>
  <button class="prefs" aria-label="Preferences"><svg width="32" height="32"><use href="#i-gear"/></svg></button>
</footer>
</body>
</html>
```

FILE: styles.css
```css
* { box-sizing: border-box; }

body {
  margin: 0;
  min-height: 100vh;
  display: flex;
  flex-direction: column;
  background: #f4f4f4;
  color: #3c3c3c;
  font-family: "Noto Sans", "Open Sans", sans-serif;
  font-size: 24px;
  line-height: 32px;
}

button {
  display: flex;
  align-items: center;
  justify-content: center;
  margin: 0;
  padding: 0;
  border: 0;
  background: none;
  color: inherit;
  font: inherit;
}

a { color: inherit; text-decoration: none; }
svg { display: block; flex: none; }
h2, h3 { margin: 0; font-size: 24px; font-weight: 400; }
.defs { position: absolute; width: 0; height: 0; }

.caret {
  flex: none;
  width: 12px;
  height: 8px;
  background: #808080;
  clip-path: polygon(0 0, 100% 0, 50% 100%);
}
.caret.big { width: 14px; height: 10px; }

.screen-top { height: 74px; background: #000; }

/* title bar */
.titlebar {
  display: flex;
  align-items: flex-end;
  height: 64px;
  background: #d9d9d9;
}
.quick {
  display: flex;
  align-items: center;
  gap: 27px;
  width: 440px;
  height: 64px;
  padding-left: 33px;
}
.quick .q-caret { gap: 14px; }
.quick .faded { opacity: .6; margin-left: -6px; }
.doc-tab {
  flex: 1;
  display: flex;
  align-items: center;
  height: 56px;
  padding-right: 21px;
}
.doc-tab.active { padding-right: 13px; background: #f4f4f4; border-radius: 8px 8px 0 0; }
.doc-name {
  flex: 1;
  display: flex;
  align-items: center;
  justify-content: center;
  gap: 10px;
  padding-top: 4px;
}
.account {
  display: flex;
  align-items: center;
  justify-content: space-between;
  width: 420px;
  height: 64px;
  padding: 0 24px;
}
.help {
  width: 32px;
  height: 32px;
  border-radius: 50%;
  background: #808080;
  color: #d9d9d9;
  font-weight: 700;
}
.avatar {
  width: 48px;
  height: 48px;
  margin-left: -8px;
  border-radius: 50%;
  background: #527d26;
  color: #fff;
}

/* ribbon */
.ribbon { display: flex; height: 170px; }
.workspace {
  width: 220px;
  height: 122px;
  margin: 21px 8px 0 23px;
  padding-bottom: 4px;
  gap: 13px;
  border: 2px solid #b9b9b9;
  border-radius: 8px;
  font-weight: 700;
}
.workspace .caret { margin-top: 3px; }
.ribbon-main { flex: 1; }
.tabs { display: flex; gap: 45px; height: 45px; padding-left: 26px; }
.tabs a { padding: 5px 24px 0; }
.tabs .on { font-weight: 700; border-bottom: 6px solid #3c3c3c; }
.groups { display: flex; }
.group {
  position: relative;
  padding: 0 10px 0 12px;
  display: flex;
  flex-direction: column;
  align-items: center;
}
.group::after {
  content: "";
  position: absolute;
  right: 0;
  top: 8px;
  width: 2px;
  height: 102px;
  background: #c4c4c4;
}
.tools { display: flex; height: 80px; align-items: center; }
.tools button { width: 86px; height: 78px; }
.tools svg { width: 64px; height: 64px; overflow: visible; }
.menu { gap: 7px; margin: 1px 9px 0 0; }
.group.wide { width: 198px; }
.group.select { width: 158px; }
.group.finish { width: 246px; }
.group.select::after, .group.finish::after { display: none; }
.wide .menu, .select .menu, .finish .menu { margin-right: 0; white-space: nowrap; }
.tools .pressed { width: 78px; border: 2px solid #7cc4e4; background: #ddedf7; }

.k { fill: none; stroke: #666; stroke-width: 2; }
.b { fill: none; stroke: #1790ea; stroke-width: 2; }
.r { fill: none; stroke: #cc2929; stroke-width: 2; }
.bf { fill: #1790ea; }

/* drawing area */
.canvas {
  position: relative;
  flex: 1;
  min-height: 1200px;
  background: #fff;
  overflow: hidden;
}
.sketch { position: absolute; inset: 0; width: 100%; height: 100%; }
.proj { fill: none; stroke: #dd8040; stroke-width: 1.5; stroke-dasharray: 12 4; }
.glyphs > * { opacity: .8; }
.g-out { fill: none; stroke: #7a7a7a; stroke-width: 8; stroke-linecap: round; stroke-linejoin: round; }
.g-in { fill: none; stroke: #ccd0d2; stroke-width: 3; stroke-linecap: round; stroke-linejoin: round; }
.dims { fill: #000; stroke: none; font-family: "Liberation Sans", Arial, sans-serif; font-size: 30px; }
.dims > path { stroke: #000; stroke-width: 1.2; }

.panel-head {
  display: flex;
  align-items: center;
  height: 49px;
  background: #f4f4f4;
  border: 1px solid #dcdcdc;
  border-bottom-width: 2px;
  border-right-width: 2px;
}
.panel-head button { margin-left: auto; }
.browser { position: absolute; left: 8px; top: 8px; width: 599px; }
.browser .panel-head { padding: 2px 23px 0 12px; gap: 26px; }
.comments { position: absolute; left: 8px; bottom: 9px; width: 599px; padding: 2px 23px 0 54px; }

.tree { list-style: none; margin: 11px 0 0; padding: 0; display: grid; gap: 8px; }
.tree li { position: relative; display: flex; height: 40px; }
.tree .l0 { padding-left: 72px; }
.tree .l1 { padding-left: 108px; }
.tree .l2 { padding-left: 144px; }
.tree .tw { position: absolute; top: 15px; left: 35px; }
.tree .l1 .tw { left: 71px; }
.tree .l1 .tw[height="18"] { top: 11px; left: 75px; }
.node { display: flex; align-items: center; gap: 29px; padding: 0 26px 0 6px; background: #f4f4f4; }
.node.two { gap: 30px; padding-right: 22px; }
.node.two svg:first-child { margin-right: -12px; }
.node.root { gap: 9px; padding-right: 14px; }
.root > svg { margin-right: 3px; }
.picked { display: flex; align-items: center; align-self: stretch; gap: 29px; padding: 0 19px 0 8px; background: #d8d8d8; }
.root input {
  appearance: none;
  width: 26px;
  height: 26px;
  margin: 0;
  border: 2px solid #555;
  border-radius: 50%;
  background: radial-gradient(circle, #333 0 5px, transparent 6px), linear-gradient(#a8b4cc, #fff);
}

.viewcube { position: absolute; right: 75px; top: 75px; width: 105px; height: 105px; }
.face {
  display: flex;
  align-items: center;
  justify-content: center;
  height: 100%;
  background: rgba(236, 236, 236, .85);
  border: 1px solid #777;
  box-shadow: 0 0 20px rgba(0, 0, 0, .2);
}
.face span {
  width: 67px;
  padding: 17px 0;
  background: #e5e7ec;
  color: #9c9fa5;
  font-family: "Liberation Sans Narrow", "Noto Sans", sans-serif;
  font-size: 28px;
  font-weight: 700;
  text-align: center;
}
.ax { position: absolute; font-size: 28px; font-weight: 500; }
.ax-y { left: -13px; top: -24px; color: #7dff7d; }
.ax-x { right: -26px; top: -9px; color: #ff7b7b; }
.ax-z { left: 0; bottom: -35px; color: #7b7bff; }
.ax-x::before, .ax-z::before { content: ""; position: absolute; background: currentColor; }
.ax-x::before { left: -9px; top: 17px; width: 5px; height: 2px; }
.ax-z::before { left: 8px; top: 0; width: 2px; height: 5px; }

.palette { position: absolute; right: 10px; top: 248px; width: 498px; background: #f4f4f4; }
.palette .panel-head { padding: 0 9px 0 23px; gap: 16px; }
.palette .ff { margin-left: auto; }
.palette-body { padding: 0 0 2px 24px; border: 2px solid #e0e0e0; border-top: 0; }
.palette h3 { display: flex; align-items: center; gap: 8px; height: 63px; margin-left: -6px; font-weight: 700; }
.opt { display: grid; grid-template-columns: 320px 1fr; align-items: center; height: 62px; }
.opt > button { justify-self: start; margin-left: -3px; }
.two-icons { display: flex; gap: 24px; margin-left: -5px; }
.opt input {
  appearance: none;
  position: relative;
  width: 28px;
  height: 28px;
  margin: 0;
  background: #fff;
  border: 2px solid #c0c0c0;
}
.opt input:checked { background: #808080; border-color: #808080; }
.opt input:checked::after {
  content: "";
  position: absolute;
  left: 3px;
  top: 4px;
  width: 19px;
  height: 16px;
  background: #fff;
  clip-path: polygon(0 52%, 17% 33%, 37% 58%, 80% 0, 100% 18%, 38% 100%);
}
.palette footer { display: flex; justify-content: flex-end; height: 72px; padding: 12px 24px 0 0; border: 1px solid #e0e0e0; border-width: 0 2px 2px 1px; }
.palette footer button { width: 204px; height: 47px; border: 2px solid #b9b9b9; border-radius: 4px; }

.navbar {
  position: absolute;
  left: 1274px;
  bottom: 11px;
  width: 478px;
  height: 48px;
  display: flex;
  align-items: center;
  justify-content: space-between;
  padding: 0 4px 0 5px;
  background: #f4f4f4;
}
.nv { gap: 5px; }
.nv:first-child { gap: 10px; }
.nv .caret { width: 11px; }

/* timeline */
.timeline { position: relative; display: flex; height: 101px; padding: 24px 24px 0; }
.play { display: flex; align-items: center; gap: 24px; height: 66px; }
.track { margin-left: 44px; }
.prefs { margin-left: auto; height: 66px; }
```
